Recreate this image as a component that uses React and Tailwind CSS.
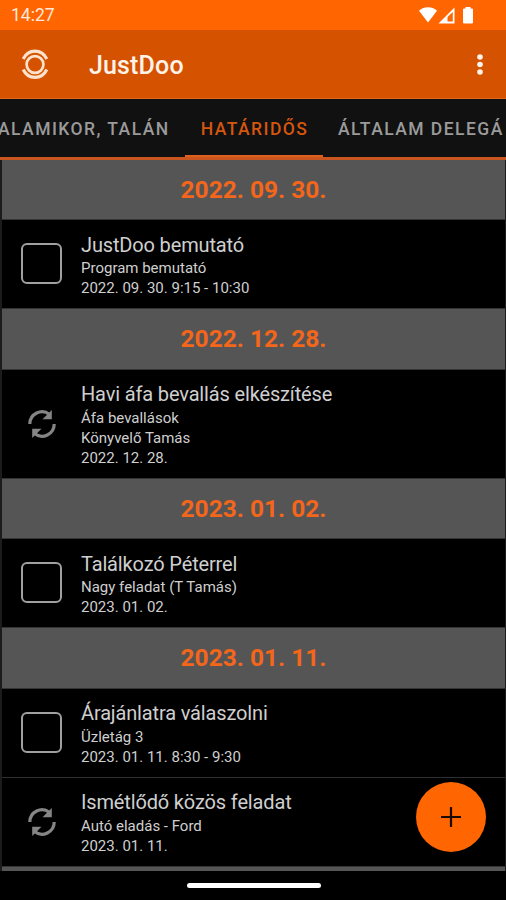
const sections = [
    {
        date: '2022. 09. 30.',
        items: [
            { title: 'JustDoo bemutató', lines: ['Program bemutató', '2022. 09. 30. 9:15 - 10:30'] },
        ],
    },
    {
        date: '2022. 12. 28.',
        items: [
            {
                title: 'Havi áfa bevallás elkészítése',
                lines: ['Áfa bevallások', 'Könyvelő Tamás', '2022. 12. 28.'],
                recurring: true,
            },
        ],
    },
    {
        date: '2023. 01. 02.',
        items: [
            { title: 'Találkozó Péterrel', lines: ['Nagy feladat (T Tamás)', '2023. 01. 02.'] },
        ],
    },
    {
        date: '2023. 01. 11.',
        items: [
            { title: 'Árajánlatra válaszolni', lines: ['Üzletág 3', '2023. 01. 11. 8:30 - 9:30'] },
            { title: 'Ismétlődő közös feladat', lines: ['Autó eladás - Ford', '2023. 01. 11.'], recurring: true },
        ],
    },
];

function StatusBar() {
    return (
        <div className="flex h-[30px] items-center justify-between bg-[#ff6500] pr-[32px] pl-[11px] text-white">
            <span className="pt-[2px] text-[17.5px] leading-none text-[#ffe9dc]">14:27</span>
            <svg width="55" height="18" viewBox="0 0 55 18" fill="currentColor">
                <path d="M0 4.700C5 .2 13 .2 18 4.700L9 16.500Z" />
                <path fillRule="evenodd" d="M19.500 17.500L35.500 1.500V17.500ZM28.500 11V15.500H33.800V6Z" />
                <path d="M46.500 1h5v1.500h1.500q1 0 1 1V16.500q0 1-1 1h-8q-1 0-1-1V3.500q0-1 1-1h1.500z" />
            </svg>
        </div>
    );
}

function Logo() {
    return (
        <svg width="28" height="32" viewBox="0 0 28 32" fill="none" stroke="#ffe2cc">
            <circle cx="14" cy="16.500" r="8.400" strokeWidth="2.700" />
            <path strokeWidth="3.200" d="M2.200 11Q6 3.100 14 3.100T25.800 11M2.200 21.500Q6 29.400 14 29.400T25.800 21.500" />
        </svg>
    );
}

function AppBar() {
    return (
        <header className="flex h-[69px] items-center border-b border-[#e0661c] bg-[#d45200] pr-[22px] pl-[21px]">
            <Logo />
            <h1 className="ml-10 flex-1 pt-[2px] text-[25px] leading-none font-medium tracking-[0.15px] text-[#fff3ea]">JustDoo</h1>
            <svg width="8" height="24" viewBox="0 0 8 24" fill="#fff3ea">
                <circle cx="4" cy="5" r="2.800" />
                <circle cx="4" cy="12.500" r="2.800" />
                <circle cx="4" cy="20" r="2.800" />
            </svg>
        </header>
    );
}

function Tabs() {
    return (
        <nav className="flex h-[61px] overflow-hidden border-b-[3px] border-[#c9561f] bg-[#111] text-[17.5px] font-medium tracking-[1.45px] whitespace-nowrap text-[#9b9b9b]">
            <div className="-ml-[2px] flex w-[187px] shrink-0 items-center pt-[2px]">ALAMIKOR, TALÁN</div>
            <div className="flex w-[138px] shrink-0 items-center justify-center border-b-2 border-[#df5f1c] pt-[4px] pl-px text-[#d5560f]">
                HATÁRIDŐS
            </div>
            <div className="flex shrink-0 items-center pt-[2px] pl-[15px]">ÁLTALAM DELEGÁ</div>
        </nav>
    );
}

function DateHeader({ date }) {
    return (
        <h2 className="flex h-[61.5px] items-center justify-center border-y border-[#343434] bg-[#555] pt-[2px] text-[24.5px] font-bold text-[#f4661a]">
            {date}
        </h2>
    );
}

function RepeatIcon() {
    return (
        <svg width="30" height="30" viewBox="0 0 30 30" fill="none" stroke="#858585" strokeWidth="3.200">
            <path d="M2.800 15A12.200 12.200 0 0 1 22.500 5.400M27.200 15A12.200 12.200 0 0 1 7.500 24.600" />
            <path fill="#858585" stroke="none" d="M24.800 1V10.300H15.500ZM5.200 29V19.700H14.500Z" />
        </svg>
    );
}

function Task({ task }) {
    return (
        <li className="flex">
            <div className="flex w-[79px] shrink-0 items-center justify-center">
                {task.recurring ? (
                    <RepeatIcon />
                ) : (
                    <span className="mb-px size-[41px] rounded-[6px] border-2 border-[#a0a0a0]" />
                )}
            </div>
            <div className="pt-[11.5px] pb-[10px] text-[#cfcfcf]">
                <h3 className="text-[20px] leading-[26.5px] tracking-[-0.15px]">{task.title}</h3>
                {task.lines.map((line) => (
                    <p key={line} className="text-[15px] leading-[20px]">{line}</p>
                ))}
            </div>
        </li>
    );
}

export default function App() {
    return (
        <div className="relative flex h-[900px] w-[506px] flex-col overflow-hidden bg-black font-['Roboto',sans-serif]">
            <StatusBar />
            <AppBar />
            <Tabs />
            <main className="h-[711px] overflow-hidden border-r border-l-2 border-[#1c1c1c]">
                {sections.map((section, i) => (
                    <section key={section.date} className={i === 0 ? '-mt-[1.5px]' : ''}>
                        <DateHeader date={section.date} />
                        <ul className="divide-y divide-[#303030]">
                            {section.items.map((task) => (
                                <Task key={task.title} task={task} />
                            ))}
                        </ul>
                    </section>
                ))}
                <div className="h-[6px] border-t border-[#343434] bg-[#555]" />
            </main>
            <div className="mt-[12px] ml-[187px] h-[5px] w-[134px] rounded-full bg-white" />
            <button
                aria-label="Új feladat"
                className="absolute top-[782px] left-[416px] flex size-[70px] items-center justify-center rounded-full bg-[#ff6500]"
            >
                <svg width="20" height="20" viewBox="0 0 20 20" stroke="#1a0a00" strokeWidth="2.200">
                    <path d="M10 0V20M0 10H20" />
                </svg>
            </button>
        </div>
    );
}
